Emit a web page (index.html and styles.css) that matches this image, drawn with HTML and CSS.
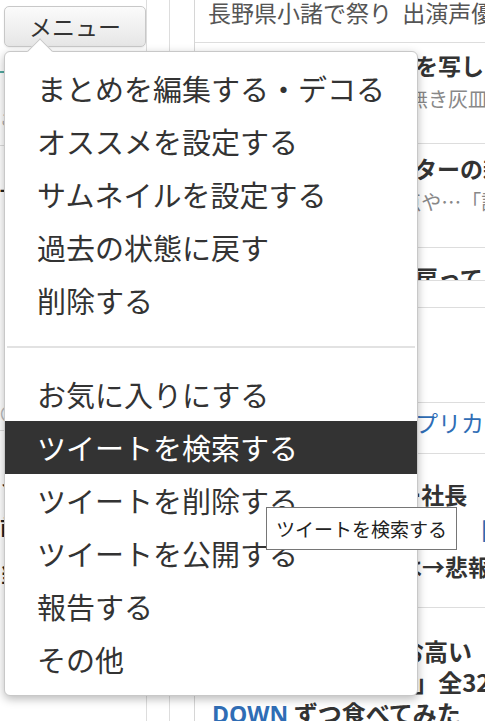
FILE: index.html
```html
<!DOCTYPE html>
<html lang="ja">
<head>
    <meta charset="UTF-8">
    <meta name="viewport" content="width=device-width, initial-scale=1.0">
    <title>まとめ</title>
    <link rel="stylesheet" href="styles.css">
</head>
<body>
    <div class="page">
        <aside class="side">
            <button class="menu-btn">メニュー</button>
            <div class="side-rule"></div>
            <p class="side-note">こちらもおすすめ</p>
            <div class="side-line"></div>
            <p class="side-title">」人気のまとめ</p>
            <p class="side-dot">・</p>
            <p class="side-circle">〇</p>
            <div class="side-line side-line-low"></div>
            <p class="side-title side-title-low">ノ</p>
            <p class="side-title">前</p>
            <p class="side-title">当</p>
        </aside>
        <div class="rail"></div>
        <main class="list">
            <div class="row r1">長野県小諸で祭り&nbsp; 出演声優が登場</div>
            <div class="row r2">
                <p class="title">閉店した老舗の店内を写した写真</p>
                <p class="desc">懐かしい喫茶店の今は無き灰皿</p>
            </div>
            <div class="row r3">
                <p class="title">往年の人気キャラクターの新作</p>
                <p class="desc">当時の人気の商品300点や…「設定資料</p>
            </div>
            <div class="row r4">
                <p class="title">あの味が十年ぶりに戻ってきた</p>
            </div>
            <div class="row r5"></div>
            <div class="row r6"></div>
            <div class="row r7">
                <p class="link">人気作品の衣装をレプリカで再現</p>
            </div>
            <div class="row r8">
                <p class="title">ゲーム界のメーカー社長</p>
                <p class="title">語る成功の秘訣とは。　<span class="blue">【動画】</span></p>
                <p class="title">話題になった理由は→悲報</p>
            </div>
            <div class="row r9">
                <p class="title">ちょっとお値段がお高い</p>
                <p class="title">老舗5店の「カレー」全32種</p>
                <p class="title"><span class="down">DOWN</span> ずつ食べてみた</p>
            </div>
        </main>
    </div>

    <div class="menu">
        <ul class="menu-list">
            <li>まとめを編集する・デコる</li>
            <li>オススメを設定する</li>
            <li>サムネイルを設定する</li>
            <li>過去の状態に戻す</li>
            <li>削除する</li>
        </ul>
        <hr class="menu-sep">
        <ul class="menu-list">
            <li>お気に入りにする</li>
            <li class="active">ツイートを検索する</li>
            <li>ツイートを削除する</li>
            <li>ツイートを公開する</li>
            <li>報告する</li>
            <li>その他</li>
        </ul>
    </div>

    <div class="tooltip">ツイートを検索する</div>
</body>
</html>
```

FILE: styles.css
```css
body {
    margin: 0;
    width: 485px;
    height: 721px;
    overflow: hidden;
    background: #fff;
    font-family: "Noto Sans CJK JP", "Noto Sans", sans-serif;
    color: #333;
    text-spacing-trim: space-all;
}
p {
    margin: 0;
}
.page {
    display: flex;
    height: 721px;
}

/* left column */
.side {
    width: 146px;
    flex: none;
    overflow: hidden;
}
.menu-btn {
    display: block;
    margin: 6px 0 0 4px;
    width: 142px;
    height: 41px;
    padding: 0;
    border: 1px solid #c8c8c8;
    border-radius: 5px;
    background: linear-gradient(#fbfbfb, #e6e6e6);
    box-shadow: 0 1px 2px rgba(0, 0, 0, 0.08);
    font-family: inherit;
    font-size: 23px;
    line-height: 39px;
    color: #333;
}
.side-rule {
    margin-top: 24px;
    border-top: 2px solid #52a9a0;
}
.side-note {
    margin-top: 36px;
    font-size: 15px;
    line-height: 20px;
    color: #aaa;
}
.side-line {
    margin-top: 16px;
    border-top: 1px solid #ddd;
}
.side-title {
    margin-top: 24px;
    font-size: 20px;
    line-height: 24px;
    font-weight: 700;
    color: #222;
    white-space: nowrap;
}
.side-dot {
    margin-top: 22px;
    font-size: 16px;
    color: #555;
}
.side-circle {
    margin-top: 160px;
    font-size: 18px;
    color: #bbb;
}
.side-line-low {
    margin-top: 4px;
}
.side-title-low {
    margin-top: 36px;
}

.rail {
    width: 24px;
    flex: none;
    box-sizing: border-box;
    border-left: 1px solid #ddd;
    border-right: 1px solid #ddd;
}

/* main list */
.list {
    flex: 1;
    margin-left: 24px;
    border-left: 1px solid #d6d6d6;
    min-width: 0;
}
.row {
    box-sizing: border-box;
    padding-left: 13px;
    border-bottom: 1px solid #ddd;
    white-space: nowrap;
    overflow: hidden;
}
.title {
    font-size: 23px;
    font-weight: 700;
    line-height: 34px;
    color: #333;
}
.desc {
    font-size: 20px;
    line-height: 34px;
    color: #888;
}
.r1 {
    height: 43px;
    font-size: 23px;
    line-height: 25px;
    color: #555;
}
.r2 {
    height: 101px;
    padding-top: 5px;
}
.r3 {
    height: 104px;
    padding-top: 7px;
}
.r4 {
    height: 33px;
    padding-top: 12px;
}
.r5 {
    height: 27px;
}
.r6 {
    height: 95px;
}
.r7 {
    height: 51px;
    padding-top: 4px;
}
.link {
    font-size: 23px;
    line-height: 30px;
    color: #2f6db5;
}
.r8 {
    height: 154px;
    padding-top: 22px;
    padding-left: 20px;
}
.r8 .title {
    line-height: 36px;
}
.blue {
    color: #2f6db5;
}
.r9 {
    height: 140px;
    padding-top: 27px;
    border-bottom: 0;
}
.r9 .title {
    font-size: 24px;
    line-height: 31px;
}
.down {
    margin-left: 4px;
    font-family: "Open Sans", "Liberation Sans", sans-serif;
    font-size: 23px;
    font-weight: 700;
    color: #2f6db5;
}

/* dropdown menu */
.menu {
    position: absolute;
    left: 4px;
    top: 51px;
    width: 414px;
    box-sizing: border-box;
    padding: 10px 0 9px;
    background: #fff;
    border: 1px solid #c8c8c8;
    border-radius: 6px;
    box-shadow: 0 3px 10px rgba(0, 0, 0, 0.28);
}
.menu::before {
    content: "";
    position: absolute;
    left: 26px;
    top: -10px;
    width: 17px;
    height: 17px;
    background: #fff;
    border-left: 1px solid #c8c8c8;
    border-top: 1px solid #c8c8c8;
    transform: rotate(45deg);
}
.menu-list {
    list-style: none;
    margin: 0;
    padding: 0;
}
.menu-list li {
    height: 53px;
    padding-left: 32px;
    font-size: 29px;
    line-height: 53px;
    color: #333;
    white-space: nowrap;
}
.menu-list li.active {
    background: #333;
    color: #fff;
}
.menu-sep {
    margin: 19px 2px 20px;
    height: 0;
    border: 0;
    border-top: 2px solid #e2e2e2;
}

.tooltip {
    position: absolute;
    left: 266px;
    top: 507px;
    height: 43px;
    box-sizing: border-box;
    padding: 0 9px;
    background: #fff;
    border: 1px solid #767676;
    font-size: 19px;
    line-height: 41px;
    color: #222;
    white-space: nowrap;
}
```
